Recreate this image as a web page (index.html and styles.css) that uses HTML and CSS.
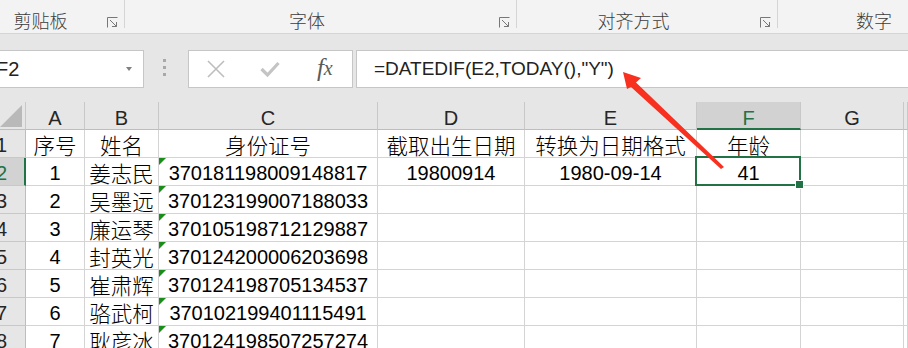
FILE: index.html
```html
<!DOCTYPE html>
<html lang="zh-CN">
<head>
    <meta charset="UTF-8">
    <title>年龄计算</title>
    <link rel="stylesheet" href="styles.css">
</head>
<body>

<div class="ribbon">
    <div class="group g1">
        <div class="group-label">剪贴板</div>
        <svg class="launcher" viewBox="0 0 11 11"><path d="M0.5 10.5V0.5H10.5M3 3L9.5 9.5M5 9.5H9.5V5" fill="none" stroke="#777" stroke-width="1"/></svg>
    </div>
    <div class="group g2">
        <div class="group-label">字体</div>
        <svg class="launcher" viewBox="0 0 11 11"><path d="M0.5 10.5V0.5H10.5M3 3L9.5 9.5M5 9.5H9.5V5" fill="none" stroke="#777" stroke-width="1"/></svg>
    </div>
    <div class="group g3">
        <div class="group-label">对齐方式</div>
        <svg class="launcher" viewBox="0 0 11 11"><path d="M0.5 10.5V0.5H10.5M3 3L9.5 9.5M5 9.5H9.5V5" fill="none" stroke="#777" stroke-width="1"/></svg>
    </div>
    <div class="group g4">
        <div class="group-label">数字</div>
    </div>
</div>

<div class="fbar">
    <div class="namebox">
        <span>F2</span>
        <div class="dropdown"></div>
    </div>
    <div class="dots"><i></i><i></i><i></i></div>
    <div class="fx-box">
        <div class="slot">
            <svg width="18" height="18" viewBox="0 0 18 18"><path d="M1 1L17 17M17 1L1 17" stroke="#bdbdbd" stroke-width="1.6"/></svg>
        </div>
        <div class="slot">
            <svg width="20" height="18" viewBox="0 0 20 18"><path d="M1.5 9L7.5 15L18.5 3" fill="none" stroke="#c4c4c4" stroke-width="3.2"/></svg>
        </div>
        <div class="slot fx"><span class="f">f</span><span class="x">x</span></div>
    </div>
    <div class="formula">=DATEDIF(E2,TODAY(),"Y")</div>
</div>

<div class="sheet">
    <div class="c h corner"></div>
    <div class="c h">A</div>
    <div class="c h">B</div>
    <div class="c h">C</div>
    <div class="c h">D</div>
    <div class="c h">E</div>
    <div class="c h sel">F</div>
    <div class="c h">G</div>
    <div class="c h"></div>

    <div class="c rh"><span>1</span></div>
    <div class="c zh">序号</div>
    <div class="c zh">姓名</div>
    <div class="c zh">身份证号</div>
    <div class="c zh">截取出生日期</div>
    <div class="c zh">转换为日期格式</div>
    <div class="c zh">年龄</div>
    <div class="c"></div>
    <div class="c"></div>

    <div class="c rh sel"><span>2</span></div>
    <div class="c">1</div>
    <div class="c zh">姜志民</div>
    <div class="c txt">370181198009148817</div>
    <div class="c">19800914</div>
    <div class="c">1980-09-14</div>
    <div class="c active">41</div>
    <div class="c"></div>
    <div class="c"></div>

    <div class="c rh"><span>3</span></div>
    <div class="c">2</div>
    <div class="c zh">吴墨远</div>
    <div class="c txt">370123199007188033</div>
    <div class="c"></div>
    <div class="c"></div>
    <div class="c"></div>
    <div class="c"></div>
    <div class="c"></div>

    <div class="c rh"><span>4</span></div>
    <div class="c">3</div>
    <div class="c zh">廉运琴</div>
    <div class="c txt">370105198712129887</div>
    <div class="c"></div>
    <div class="c"></div>
    <div class="c"></div>
    <div class="c"></div>
    <div class="c"></div>

    <div class="c rh"><span>5</span></div>
    <div class="c">4</div>
    <div class="c zh">封英光</div>
    <div class="c txt">370124200006203698</div>
    <div class="c"></div>
    <div class="c"></div>
    <div class="c"></div>
    <div class="c"></div>
    <div class="c"></div>

    <div class="c rh"><span>6</span></div>
    <div class="c">5</div>
    <div class="c zh">崔肃辉</div>
    <div class="c txt">370124198705134537</div>
    <div class="c"></div>
    <div class="c"></div>
    <div class="c"></div>
    <div class="c"></div>
    <div class="c"></div>

    <div class="c rh"><span>7</span></div>
    <div class="c">6</div>
    <div class="c zh">骆武柯</div>
    <div class="c txt">370102199401115491</div>
    <div class="c"></div>
    <div class="c"></div>
    <div class="c"></div>
    <div class="c"></div>
    <div class="c"></div>

    <div class="c rh"><span>8</span></div>
    <div class="c">7</div>
    <div class="c zh">耿彦冰</div>
    <div class="c txt">370124198507257274</div>
    <div class="c"></div>
    <div class="c"></div>
    <div class="c"></div>
    <div class="c"></div>
    <div class="c"></div>
</div>

<!-- стрелка-указатель поверх листа -->
<svg class="arrow" viewBox="0 0 908 348">
    <polygon points="623,72 641,78 636,82.5 724,167 721,169 631,87 627,89" fill="#f7301f"/>
</svg>

</body>
</html>
```

FILE: styles.css
```css
* {
    box-sizing: border-box;
}

body {
    margin: 0;
    width: 908px;
    height: 348px;
    overflow: hidden;
    position: relative;
    background: #fff;
    font-family: "Liberation Sans", "Noto Sans CJK SC", sans-serif;
}

/* ленточка */
.ribbon {
    display: flex;
    height: 34px;
    background: #f3f3f3;
    border-bottom: 1px solid #d5d5d5;
}

.group {
    display: flex;
    align-items: flex-end;
    height: 28px;
    flex: none;
    border-right: 1px solid #d5d5d5;
    font-family: "Noto Sans CJK SC", sans-serif;
    font-size: 18px;
    font-weight: 300;
    color: #3c3c3c;
}

.group-label {
    flex: 1;
    text-align: center;
    line-height: 22px;
    margin-bottom: -3px;
    white-space: nowrap;
}

.launcher {
    width: 11px;
    height: 11px;
    margin: 0 6px 0 10px;
    flex: none;
}

.g1 {
    width: 125px;
}

.g1 .group-label {
    padding-right: 16px;
}

.g2 {
    width: 392px;
}

.g3 {
    width: 261px;
}

.g4 {
    width: 192px;
    border-right: none;
}

/* строка формул */
.fbar {
    display: flex;
    align-items: flex-start;
    height: 68px;
    padding-top: 16px;
    background: #e6e6e6;
}

.namebox {
    width: 145px;
    height: 38px;
    margin-left: -1px;
    background: #fff;
    border: 1px solid #c6c6c6;
    display: flex;
    align-items: center;
    font-size: 20px;
    color: #222;
}

.namebox span {
    flex: 1;
    margin-left: -4px;
}

.dropdown {
    width: 0;
    height: 0;
    border-left: 3.5px solid transparent;
    border-right: 3.5px solid transparent;
    border-top: 4px solid #808080;
    margin-right: 11px;
}

.dots {
    width: 44px;
    padding: 9px 3px 0 0;
    display: flex;
    flex-direction: column;
    align-items: center;
    gap: 4px;
}

.dots i {
    width: 3px;
    height: 3px;
    background: #a8a8a8;
}

.fx-box {
    width: 165px;
    height: 38px;
    background: #fff;
    border: 1px solid #c6c6c6;
    display: flex;
}

.slot {
    flex: 1;
    display: flex;
    align-items: center;
    justify-content: center;
}

.fx {
    font-family: "Liberation Serif", serif;
    font-style: italic;
    color: #5a5a5a;
    padding-bottom: 2px;
}

.fx .f {
    font-size: 25px;
}

.fx .x {
    font-size: 20px;
}

.formula {
    flex: 1;
    height: 38px;
    margin-left: 3px;
    padding-left: 17px;
    background: #fff;
    border: 1px solid #c6c6c6;
    border-right: none;
    display: flex;
    align-items: center;
    font-size: 19px;
    color: #222;
    white-space: nowrap;
}

/* лист */
.sheet {
    display: grid;
    grid-template-columns: 26px 59px 74px 219px 147px 172px 104px 103px 1fr;
    grid-auto-rows: 28px;
}

.c {
    position: relative;
    display: flex;
    align-items: center;
    justify-content: center;
    padding-top: 3px;
    border-right: 1px solid #d4d4d4;
    border-bottom: 1px solid #d4d4d4;
    font-size: 20px;
    color: #000;
    white-space: nowrap;
}

.zh {
    font-family: "Noto Sans CJK SC", sans-serif;
    font-size: 21.5px;
    font-weight: 300;
    padding-top: 2px;
}

.h {
    background: #e6e6e6;
    border-right-color: #c8c8c8;
    border-bottom-color: #bdbdbd;
    padding-top: 6px;
    color: #262626;
}

.h.sel {
    background: #d2d2d2;
    border-bottom: 2px solid #217346;
    color: #217346;
}

.corner::after {
    content: "";
    position: absolute;
    left: 0;
    top: 3px;
    width: 22px;
    height: 22px;
    background: #b9b9b9;
    clip-path: polygon(100% 0, 100% 100%, 0 100%);
}

.rh {
    background: #e6e6e6;
    border-right-color: #bdbdbd;
    border-bottom-color: #c8c8c8;
    justify-content: flex-start;
    color: #262626;
}

.rh span {
    margin-left: -4px;
}

.rh.sel {
    background: #d2d2d2;
    border-right: 2px solid #217346;
    color: #217346;
}

.txt::before {
    content: "";
    position: absolute;
    left: 0;
    top: 0;
    width: 7px;
    height: 7px;
    background: #1a8c1a;
    clip-path: polygon(0 0, 100% 0, 0 100%);
}

.active::after {
    content: "";
    position: absolute;
    left: -2px;
    top: -2px;
    right: -1px;
    bottom: -1px;
    border: 2px solid #217346;
}

.active::before {
    content: "";
    position: absolute;
    right: -4px;
    bottom: -4px;
    width: 7px;
    height: 7px;
    background: #217346;
    border: 1px solid #fff;
    z-index: 1;
}

.arrow {
    position: absolute;
    left: 0;
    top: 0;
    width: 908px;
    height: 348px;
    pointer-events: none;
}
```
